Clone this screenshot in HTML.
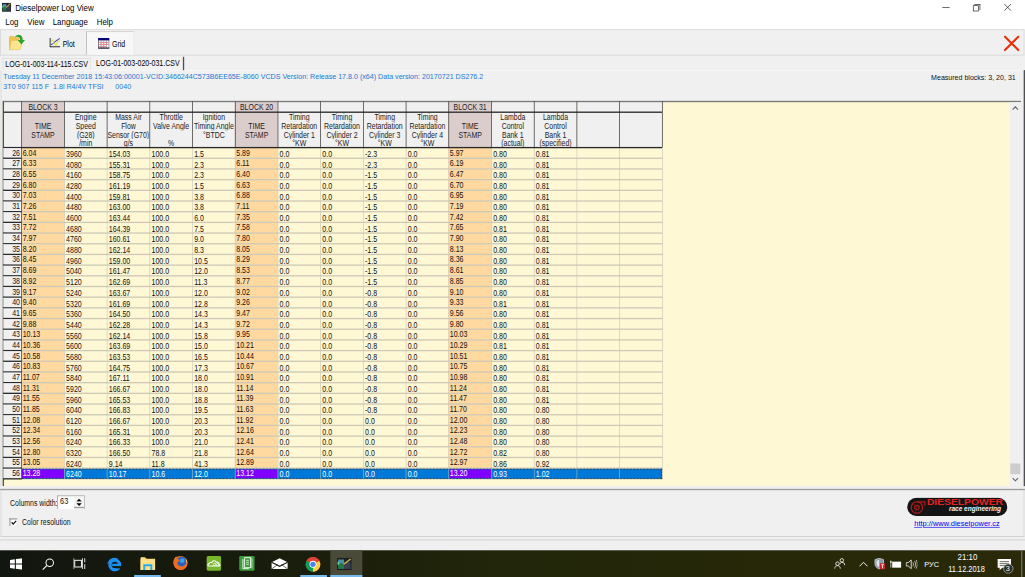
<!DOCTYPE html>
<html><head><meta charset="utf-8"><style>
html,body{margin:0;padding:0;width:1025px;height:577px;overflow:hidden;background:#f0f0f0}
*{box-sizing:border-box}
#root{position:absolute;left:0;top:0;width:1536px;height:864px;transform-origin:0 0;transform:scale(0.667318,0.667824);font-family:"Liberation Sans",sans-serif;color:#000;background:#f0f0f0;overflow:hidden}
.a{position:absolute}
.t{position:absolute;white-space:pre;line-height:1}
.hl{position:absolute;background:#2a2a2a}
.gc{position:absolute;font-size:13px;line-height:13px;text-align:center;color:#1c1c1c;white-space:pre;overflow:hidden}
.gc span{display:block;width:125%;transform:scaleX(0.8);transform-origin:0 0;text-align:center}
.d{position:absolute;font-size:13px;line-height:16px;white-space:pre;color:#111;transform:scaleX(0.81);transform-origin:0 0}
.d.r{transform-origin:100% 0}
</style></head><body><div id="root">

<div class="a" style="left:0;top:0;width:1536px;height:44px;background:#fff"></div>
<svg class="a" style="left:3px;top:4.3px" width="13.5" height="13.5" viewBox="0 0 27 27">
<rect x="0" y="0" width="27" height="27" fill="#1c1f24"/>
<rect x="2" y="4" width="11" height="9" fill="#4a90a0"/>
<rect x="2" y="13" width="11" height="11" fill="#1f7a45"/>
<rect x="1" y="9" width="3" height="6" fill="#6ad0a0"/>
<rect x="13" y="10" width="12" height="14" fill="#3a4050"/>
<path d="M12 14 L17 10 L25 3" stroke="#b8a848" stroke-width="3.2" fill="none"/>
</svg>
<div class="t" style="left:22.5px;top:5.3px;font-size:13px;color:#000;transform:scaleX(0.915);transform-origin:0 0">Dieselpower Log View</div>
<div class="a" style="left:1412px;top:11px;width:11px;height:1px;background:#222"></div>
<div class="a" style="left:1458px;top:8px;width:9px;height:9px;border:1px solid #222"></div>
<div class="a" style="left:1460px;top:6px;width:9px;height:9px;border-top:1px solid #222;border-right:1px solid #222"></div>
<svg class="a" style="left:1504px;top:5px" width="12" height="12" viewBox="0 0 12 12"><path d="M1 1L11 11M11 1L1 11" stroke="#222" stroke-width="1.1"/></svg>
<div class="t" style="left:7.5px;top:26.2px;font-size:13px;color:#000;transform:scaleX(0.91);transform-origin:0 0">Log</div>
<div class="t" style="left:40.8px;top:26.2px;font-size:13px;color:#000;transform:scaleX(0.91);transform-origin:0 0">View</div>
<div class="t" style="left:79.4px;top:26.2px;font-size:13px;color:#000;transform:scaleX(0.91);transform-origin:0 0">Language</div>
<div class="t" style="left:145.4px;top:26.2px;font-size:13px;color:#000;transform:scaleX(0.91);transform-origin:0 0">Help</div>
<div class="a" style="left:0;top:43.5px;width:1535px;height:39px;background:#f0f0f0;border:1px solid #d2d2d2;border-bottom-color:#cfcfcf"></div>
<div class="a" style="left:129px;top:47px;width:72px;height:35px;background:#f7f7f7;border-left:1.5px solid #a8a8a8;border-top:1.5px solid #c4c4c4;border-right:1px solid #e8e8e8"></div>
<svg class="a" style="left:13px;top:50px" width="26" height="26" viewBox="0 0 26 26">
<path d="M1 6.5 Q1 4.5 3 4.5 L7.5 4.5 L9.5 6.5 L15 6.5 L15 22 L1.5 24.5 Z" fill="#f0c250" stroke="#dcaa38" stroke-width="0.8"/>
<path d="M1.2 24.5 L3.5 12.5 Q4 10.5 6 10.5 L20.5 10.5 L18 22.5 Q17.5 24.5 15.5 24.5 Z" fill="#fde48e" stroke="#e6bc50" stroke-width="0.8"/>
<path d="M8.5 6 Q12 1 17 2.5 Q21 4 21 10 L24.5 10 L19 16.5 L13.5 10 L17 10 Q17 6.5 15 5.5 Q12 4.5 8.5 6 Z" fill="#2aa52a"/>
</svg>
<svg class="a" style="left:74px;top:56px" width="17" height="16" viewBox="0 0 17 16">
<path d="M1 1V14H16" fill="none" stroke="#303038" stroke-width="1.8"/>
<path d="M2.5 11 L6 9 L9 6 L12 4 L15.5 1.5" fill="none" stroke="#3a48b8" stroke-width="1.6"/>
<path d="M2.5 6 L5 4 L7 9 L10 12 L12.5 6 L15.5 5" fill="none" stroke="#e8e030" stroke-width="1.6"/>
<path d="M4 15.5V16M8 15.5V16M12 15.5V16" stroke="#888" stroke-width="1"/>
</svg>
<div class="t" style="left:94.4px;top:58.5px;font-size:13px;color:#000;transform:scaleX(0.8);transform-origin:0 0">Plot</div>
<svg class="a" style="left:146.5px;top:56.5px" width="17" height="16" viewBox="0 0 17 16">
<rect x="0.5" y="0.5" width="16" height="15" fill="#fff" stroke="#303040" stroke-width="1"/>
<rect x="0" y="0" width="17" height="3.5" fill="#00007a"/>
<path d="M4.5 3V15M8.5 3V15M12.5 3V15" stroke="#707070" stroke-width="0.9"/>
<path d="M1 6.5H16M1 9.5H16M1 12.5H12" stroke="#e06070" stroke-width="1.1"/>
<rect x="0" y="14" width="17" height="2" fill="#303040"/>
</svg>
<div class="t" style="left:168px;top:58.5px;font-size:13px;color:#000;transform:scaleX(0.8);transform-origin:0 0">Grid</div>
<svg class="a" style="left:1504px;top:53px" width="24" height="24" viewBox="0 0 24 24"><path d="M2 2 L22 22 M22 2 L2 22" stroke="#e8300a" stroke-width="3.2" stroke-linecap="round"/></svg>
<div class="a" style="left:3.5px;top:86.5px;width:132px;height:19px;background:#f0f0f0;border:1px solid #dadada;border-bottom:none"></div>
<div class="a" style="left:136px;top:84.5px;width:140px;height:21px;background:#f2f2f2;border-right:2px solid #505050"></div>
<div class="t" style="left:8.4px;top:89.4px;font-size:13px;color:#000;transform:scaleX(0.81);transform-origin:0 0">LOG-01-003-114-115.CSV</div>
<div class="t" style="left:143.7px;top:87.5px;font-size:13px;color:#000;transform:scaleX(0.81);transform-origin:0 0">LOG-01-003-020-031.CSV</div>
<div class="a" style="left:0;top:105px;width:1536px;height:1px;background:#fafafa"></div>
<div class="a" style="left:0.6px;top:105px;width:1.4px;height:625px;background:#d6d6d6"></div>
<div class="a" style="left:1534.2px;top:105px;width:1.6px;height:625px;background:#505050"></div>
<div class="t" style="left:5px;top:108px;font-size:12px;color:#1a7ad4;transform:scaleX(0.888);transform-origin:0 0">Tuesday 11 December 2018 15:43:06:00001-VCID:3466244C573B6EE65E-8060 VCDS Version: Release 17.8.0 (x64) Data version: 20170721 DS276.2</div>
<div class="t" style="left:5px;top:123px;font-size:12px;color:#1a7ad4;transform:scaleX(0.888);transform-origin:0 0">3T0 907 115 F  1.8l R4/4V TFSI      0040</div>
<div class="t" style="right:14px;top:109.5px;font-size:12px;color:#111;transform:scaleX(0.88);transform-origin:100% 0">Measured blocks: 3, 20, 31</div>
<div class="a" style="left:4px;top:152px;width:1526px;height:576px;background:#fff8d4"></div>
<div class="a" style="left:32px;top:152px;width:64px;height:69px;background:#dccdcd"></div>
<div class="a" style="left:96px;top:152px;width:64px;height:69px;background:#f0f0f0"></div>
<div class="a" style="left:160px;top:152px;width:64px;height:69px;background:#f0f0f0"></div>
<div class="a" style="left:224px;top:152px;width:64px;height:69px;background:#f0f0f0"></div>
<div class="a" style="left:288px;top:152px;width:64px;height:69px;background:#f0f0f0"></div>
<div class="a" style="left:352px;top:152px;width:64px;height:69px;background:#dccdcd"></div>
<div class="a" style="left:416px;top:152px;width:64px;height:69px;background:#f0f0f0"></div>
<div class="a" style="left:480px;top:152px;width:64px;height:69px;background:#f0f0f0"></div>
<div class="a" style="left:544px;top:152px;width:64px;height:69px;background:#f0f0f0"></div>
<div class="a" style="left:608px;top:152px;width:64px;height:69px;background:#f0f0f0"></div>
<div class="a" style="left:672px;top:152px;width:64px;height:69px;background:#dccdcd"></div>
<div class="a" style="left:736px;top:152px;width:64px;height:69px;background:#f0f0f0"></div>
<div class="a" style="left:800px;top:152px;width:64px;height:69px;background:#f0f0f0"></div>
<div class="a" style="left:864px;top:152px;width:64px;height:69px;background:#f0f0f0"></div>
<div class="a" style="left:928px;top:152px;width:64px;height:69px;background:#f0f0f0"></div>
<div class="a" style="left:5px;top:152px;width:27px;height:565px;background:#f0f0f0"></div>
<div class="a" style="left:32px;top:221px;width:64px;height:496px;background:#ffd9a0"></div>
<div class="a" style="left:672px;top:221px;width:64px;height:496px;background:#ffd9a0"></div>
<div class="a" style="left:352px;top:221px;width:64px;height:496px;background:#ffd9a0"></div>
<div class="a" style="left:32px;top:236.35px;width:961px;height:1.2px;background:#cfcab8"></div>
<div class="a" style="left:32px;top:252.35px;width:961px;height:1.2px;background:#cfcab8"></div>
<div class="a" style="left:32px;top:268.35px;width:961px;height:1.2px;background:#cfcab8"></div>
<div class="a" style="left:32px;top:284.35px;width:961px;height:1.2px;background:#cfcab8"></div>
<div class="a" style="left:32px;top:300.35px;width:961px;height:1.2px;background:#cfcab8"></div>
<div class="a" style="left:32px;top:316.35px;width:961px;height:1.2px;background:#cfcab8"></div>
<div class="a" style="left:32px;top:332.35px;width:961px;height:1.2px;background:#cfcab8"></div>
<div class="a" style="left:32px;top:348.35px;width:961px;height:1.2px;background:#cfcab8"></div>
<div class="a" style="left:32px;top:364.35px;width:961px;height:1.2px;background:#cfcab8"></div>
<div class="a" style="left:32px;top:380.35px;width:961px;height:1.2px;background:#cfcab8"></div>
<div class="a" style="left:32px;top:396.35px;width:961px;height:1.2px;background:#cfcab8"></div>
<div class="a" style="left:32px;top:412.35px;width:961px;height:1.2px;background:#cfcab8"></div>
<div class="a" style="left:32px;top:428.35px;width:961px;height:1.2px;background:#cfcab8"></div>
<div class="a" style="left:32px;top:444.35px;width:961px;height:1.2px;background:#cfcab8"></div>
<div class="a" style="left:32px;top:460.35px;width:961px;height:1.2px;background:#cfcab8"></div>
<div class="a" style="left:32px;top:476.35px;width:961px;height:1.2px;background:#cfcab8"></div>
<div class="a" style="left:32px;top:492.35px;width:961px;height:1.2px;background:#cfcab8"></div>
<div class="a" style="left:32px;top:508.35px;width:961px;height:1.2px;background:#cfcab8"></div>
<div class="a" style="left:32px;top:524.35px;width:961px;height:1.2px;background:#cfcab8"></div>
<div class="a" style="left:32px;top:540.35px;width:961px;height:1.2px;background:#cfcab8"></div>
<div class="a" style="left:32px;top:556.35px;width:961px;height:1.2px;background:#cfcab8"></div>
<div class="a" style="left:32px;top:572.35px;width:961px;height:1.2px;background:#cfcab8"></div>
<div class="a" style="left:32px;top:588.35px;width:961px;height:1.2px;background:#cfcab8"></div>
<div class="a" style="left:32px;top:604.35px;width:961px;height:1.2px;background:#cfcab8"></div>
<div class="a" style="left:32px;top:620.35px;width:961px;height:1.2px;background:#cfcab8"></div>
<div class="a" style="left:32px;top:636.35px;width:961px;height:1.2px;background:#cfcab8"></div>
<div class="a" style="left:32px;top:652.35px;width:961px;height:1.2px;background:#cfcab8"></div>
<div class="a" style="left:32px;top:668.35px;width:961px;height:1.2px;background:#cfcab8"></div>
<div class="a" style="left:32px;top:684.35px;width:961px;height:1.2px;background:#cfcab8"></div>
<div class="a" style="left:32px;top:700.35px;width:961px;height:1.2px;background:#cfcab8"></div>
<div class="a" style="left:32px;top:716.35px;width:961px;height:1.2px;background:#cfcab8"></div>
<div class="a" style="left:95.64999999999999px;top:221px;width:1.2px;height:496px;background:#cdc9b9"></div>
<div class="a" style="left:159.65px;top:221px;width:1.2px;height:496px;background:#cdc9b9"></div>
<div class="a" style="left:223.65px;top:221px;width:1.2px;height:496px;background:#cdc9b9"></div>
<div class="a" style="left:287.65000000000003px;top:221px;width:1.2px;height:496px;background:#cdc9b9"></div>
<div class="a" style="left:351.65000000000003px;top:221px;width:1.2px;height:496px;background:#cdc9b9"></div>
<div class="a" style="left:415.65000000000003px;top:221px;width:1.2px;height:496px;background:#cdc9b9"></div>
<div class="a" style="left:479.65000000000003px;top:221px;width:1.2px;height:496px;background:#cdc9b9"></div>
<div class="a" style="left:543.65px;top:221px;width:1.2px;height:496px;background:#cdc9b9"></div>
<div class="a" style="left:607.65px;top:221px;width:1.2px;height:496px;background:#cdc9b9"></div>
<div class="a" style="left:671.65px;top:221px;width:1.2px;height:496px;background:#cdc9b9"></div>
<div class="a" style="left:735.65px;top:221px;width:1.2px;height:496px;background:#cdc9b9"></div>
<div class="a" style="left:799.65px;top:221px;width:1.2px;height:496px;background:#cdc9b9"></div>
<div class="a" style="left:863.65px;top:221px;width:1.2px;height:496px;background:#cdc9b9"></div>
<div class="a" style="left:927.65px;top:221px;width:1.2px;height:496px;background:#cdc9b9"></div>
<div class="a" style="left:991.65px;top:221px;width:1.2px;height:496px;background:#cdc9b9"></div>
<div class="a" style="left:32.5px;top:701.5px;width:959.5px;height:15.5px;background:#0078d7;border:1px dashed #3a3020"></div>
<div class="a" style="left:33px;top:702.5px;width:63px;height:13.5px;background:#8000ff"></div>
<div class="a" style="left:673px;top:702.5px;width:63px;height:13.5px;background:#8000ff"></div>
<div class="a" style="left:353px;top:702.5px;width:63px;height:13.5px;background:#8000ff"></div>
<div class="a" style="left:95.64999999999999px;top:702px;width:1px;height:15px;background:#b8c8b0;opacity:0.8"></div>
<div class="a" style="left:159.65px;top:702px;width:1px;height:15px;background:#b8c8b0;opacity:0.8"></div>
<div class="a" style="left:223.65px;top:702px;width:1px;height:15px;background:#b8c8b0;opacity:0.8"></div>
<div class="a" style="left:287.65000000000003px;top:702px;width:1px;height:15px;background:#b8c8b0;opacity:0.8"></div>
<div class="a" style="left:351.65000000000003px;top:702px;width:1px;height:15px;background:#b8c8b0;opacity:0.8"></div>
<div class="a" style="left:415.65000000000003px;top:702px;width:1px;height:15px;background:#b8c8b0;opacity:0.8"></div>
<div class="a" style="left:479.65000000000003px;top:702px;width:1px;height:15px;background:#b8c8b0;opacity:0.8"></div>
<div class="a" style="left:543.65px;top:702px;width:1px;height:15px;background:#b8c8b0;opacity:0.8"></div>
<div class="a" style="left:607.65px;top:702px;width:1px;height:15px;background:#b8c8b0;opacity:0.8"></div>
<div class="a" style="left:671.65px;top:702px;width:1px;height:15px;background:#b8c8b0;opacity:0.8"></div>
<div class="a" style="left:735.65px;top:702px;width:1px;height:15px;background:#b8c8b0;opacity:0.8"></div>
<div class="a" style="left:799.65px;top:702px;width:1px;height:15px;background:#b8c8b0;opacity:0.8"></div>
<div class="a" style="left:863.65px;top:702px;width:1px;height:15px;background:#b8c8b0;opacity:0.8"></div>
<div class="a" style="left:927.65px;top:702px;width:1px;height:15px;background:#b8c8b0;opacity:0.8"></div>
<div class="hl" style="left:4px;top:151.25px;width:1526px;height:1.5px;background:#787878"></div>
<div class="hl" style="left:4.2px;top:152px;width:1.5px;height:576px;background:#505050"></div>
<div class="hl" style="left:5px;top:167.25px;width:987px;height:1.5px"></div>
<div class="hl" style="left:5px;top:220.25px;width:987px;height:1.5px"></div>
<div class="hl" style="left:31.6px;top:152px;width:1.7px;height:69px"></div>
<div class="hl" style="left:95.6px;top:152px;width:1.7px;height:69px"></div>
<div class="hl" style="left:159.60000000000002px;top:152px;width:1.7px;height:69px"></div>
<div class="hl" style="left:223.60000000000002px;top:152px;width:1.7px;height:69px"></div>
<div class="hl" style="left:287.6px;top:152px;width:1.7px;height:69px"></div>
<div class="hl" style="left:351.6px;top:152px;width:1.7px;height:69px"></div>
<div class="hl" style="left:415.6px;top:152px;width:1.7px;height:69px"></div>
<div class="hl" style="left:479.6px;top:152px;width:1.7px;height:69px"></div>
<div class="hl" style="left:543.5999999999999px;top:152px;width:1.7px;height:69px"></div>
<div class="hl" style="left:607.5999999999999px;top:152px;width:1.7px;height:69px"></div>
<div class="hl" style="left:671.5999999999999px;top:152px;width:1.7px;height:69px"></div>
<div class="hl" style="left:735.5999999999999px;top:152px;width:1.7px;height:69px"></div>
<div class="hl" style="left:799.5999999999999px;top:152px;width:1.7px;height:69px"></div>
<div class="hl" style="left:863.5999999999999px;top:152px;width:1.7px;height:69px"></div>
<div class="hl" style="left:927.5999999999999px;top:152px;width:1.7px;height:69px"></div>
<div class="hl" style="left:991.5999999999999px;top:152px;width:1.7px;height:69px"></div>
<div class="hl" style="left:31.6px;top:221px;width:1.7px;height:497px"></div>
<div class="a" style="left:5px;top:221.75px;width:26.25px;height:1px;background:#f8f8f8"></div>
<div class="a" style="left:5px;top:221.75px;width:1px;height:14.5px;background:#f8f8f8"></div>
<div class="hl" style="left:5px;top:236.25px;width:27px;height:1.5px"></div>
<div class="a" style="left:5px;top:237.75px;width:26.25px;height:1px;background:#f8f8f8"></div>
<div class="a" style="left:5px;top:237.75px;width:1px;height:14.5px;background:#f8f8f8"></div>
<div class="hl" style="left:5px;top:252.25px;width:27px;height:1.5px"></div>
<div class="a" style="left:5px;top:253.75px;width:26.25px;height:1px;background:#f8f8f8"></div>
<div class="a" style="left:5px;top:253.75px;width:1px;height:14.5px;background:#f8f8f8"></div>
<div class="hl" style="left:5px;top:268.25px;width:27px;height:1.5px"></div>
<div class="a" style="left:5px;top:269.75px;width:26.25px;height:1px;background:#f8f8f8"></div>
<div class="a" style="left:5px;top:269.75px;width:1px;height:14.5px;background:#f8f8f8"></div>
<div class="hl" style="left:5px;top:284.25px;width:27px;height:1.5px"></div>
<div class="a" style="left:5px;top:285.75px;width:26.25px;height:1px;background:#f8f8f8"></div>
<div class="a" style="left:5px;top:285.75px;width:1px;height:14.5px;background:#f8f8f8"></div>
<div class="hl" style="left:5px;top:300.25px;width:27px;height:1.5px"></div>
<div class="a" style="left:5px;top:301.75px;width:26.25px;height:1px;background:#f8f8f8"></div>
<div class="a" style="left:5px;top:301.75px;width:1px;height:14.5px;background:#f8f8f8"></div>
<div class="hl" style="left:5px;top:316.25px;width:27px;height:1.5px"></div>
<div class="a" style="left:5px;top:317.75px;width:26.25px;height:1px;background:#f8f8f8"></div>
<div class="a" style="left:5px;top:317.75px;width:1px;height:14.5px;background:#f8f8f8"></div>
<div class="hl" style="left:5px;top:332.25px;width:27px;height:1.5px"></div>
<div class="a" style="left:5px;top:333.75px;width:26.25px;height:1px;background:#f8f8f8"></div>
<div class="a" style="left:5px;top:333.75px;width:1px;height:14.5px;background:#f8f8f8"></div>
<div class="hl" style="left:5px;top:348.25px;width:27px;height:1.5px"></div>
<div class="a" style="left:5px;top:349.75px;width:26.25px;height:1px;background:#f8f8f8"></div>
<div class="a" style="left:5px;top:349.75px;width:1px;height:14.5px;background:#f8f8f8"></div>
<div class="hl" style="left:5px;top:364.25px;width:27px;height:1.5px"></div>
<div class="a" style="left:5px;top:365.75px;width:26.25px;height:1px;background:#f8f8f8"></div>
<div class="a" style="left:5px;top:365.75px;width:1px;height:14.5px;background:#f8f8f8"></div>
<div class="hl" style="left:5px;top:380.25px;width:27px;height:1.5px"></div>
<div class="a" style="left:5px;top:381.75px;width:26.25px;height:1px;background:#f8f8f8"></div>
<div class="a" style="left:5px;top:381.75px;width:1px;height:14.5px;background:#f8f8f8"></div>
<div class="hl" style="left:5px;top:396.25px;width:27px;height:1.5px"></div>
<div class="a" style="left:5px;top:397.75px;width:26.25px;height:1px;background:#f8f8f8"></div>
<div class="a" style="left:5px;top:397.75px;width:1px;height:14.5px;background:#f8f8f8"></div>
<div class="hl" style="left:5px;top:412.25px;width:27px;height:1.5px"></div>
<div class="a" style="left:5px;top:413.75px;width:26.25px;height:1px;background:#f8f8f8"></div>
<div class="a" style="left:5px;top:413.75px;width:1px;height:14.5px;background:#f8f8f8"></div>
<div class="hl" style="left:5px;top:428.25px;width:27px;height:1.5px"></div>
<div class="a" style="left:5px;top:429.75px;width:26.25px;height:1px;background:#f8f8f8"></div>
<div class="a" style="left:5px;top:429.75px;width:1px;height:14.5px;background:#f8f8f8"></div>
<div class="hl" style="left:5px;top:444.25px;width:27px;height:1.5px"></div>
<div class="a" style="left:5px;top:445.75px;width:26.25px;height:1px;background:#f8f8f8"></div>
<div class="a" style="left:5px;top:445.75px;width:1px;height:14.5px;background:#f8f8f8"></div>
<div class="hl" style="left:5px;top:460.25px;width:27px;height:1.5px"></div>
<div class="a" style="left:5px;top:461.75px;width:26.25px;height:1px;background:#f8f8f8"></div>
<div class="a" style="left:5px;top:461.75px;width:1px;height:14.5px;background:#f8f8f8"></div>
<div class="hl" style="left:5px;top:476.25px;width:27px;height:1.5px"></div>
<div class="a" style="left:5px;top:477.75px;width:26.25px;height:1px;background:#f8f8f8"></div>
<div class="a" style="left:5px;top:477.75px;width:1px;height:14.5px;background:#f8f8f8"></div>
<div class="hl" style="left:5px;top:492.25px;width:27px;height:1.5px"></div>
<div class="a" style="left:5px;top:493.75px;width:26.25px;height:1px;background:#f8f8f8"></div>
<div class="a" style="left:5px;top:493.75px;width:1px;height:14.5px;background:#f8f8f8"></div>
<div class="hl" style="left:5px;top:508.25px;width:27px;height:1.5px"></div>
<div class="a" style="left:5px;top:509.75px;width:26.25px;height:1px;background:#f8f8f8"></div>
<div class="a" style="left:5px;top:509.75px;width:1px;height:14.5px;background:#f8f8f8"></div>
<div class="hl" style="left:5px;top:524.25px;width:27px;height:1.5px"></div>
<div class="a" style="left:5px;top:525.75px;width:26.25px;height:1px;background:#f8f8f8"></div>
<div class="a" style="left:5px;top:525.75px;width:1px;height:14.5px;background:#f8f8f8"></div>
<div class="hl" style="left:5px;top:540.25px;width:27px;height:1.5px"></div>
<div class="a" style="left:5px;top:541.75px;width:26.25px;height:1px;background:#f8f8f8"></div>
<div class="a" style="left:5px;top:541.75px;width:1px;height:14.5px;background:#f8f8f8"></div>
<div class="hl" style="left:5px;top:556.25px;width:27px;height:1.5px"></div>
<div class="a" style="left:5px;top:557.75px;width:26.25px;height:1px;background:#f8f8f8"></div>
<div class="a" style="left:5px;top:557.75px;width:1px;height:14.5px;background:#f8f8f8"></div>
<div class="hl" style="left:5px;top:572.25px;width:27px;height:1.5px"></div>
<div class="a" style="left:5px;top:573.75px;width:26.25px;height:1px;background:#f8f8f8"></div>
<div class="a" style="left:5px;top:573.75px;width:1px;height:14.5px;background:#f8f8f8"></div>
<div class="hl" style="left:5px;top:588.25px;width:27px;height:1.5px"></div>
<div class="a" style="left:5px;top:589.75px;width:26.25px;height:1px;background:#f8f8f8"></div>
<div class="a" style="left:5px;top:589.75px;width:1px;height:14.5px;background:#f8f8f8"></div>
<div class="hl" style="left:5px;top:604.25px;width:27px;height:1.5px"></div>
<div class="a" style="left:5px;top:605.75px;width:26.25px;height:1px;background:#f8f8f8"></div>
<div class="a" style="left:5px;top:605.75px;width:1px;height:14.5px;background:#f8f8f8"></div>
<div class="hl" style="left:5px;top:620.25px;width:27px;height:1.5px"></div>
<div class="a" style="left:5px;top:621.75px;width:26.25px;height:1px;background:#f8f8f8"></div>
<div class="a" style="left:5px;top:621.75px;width:1px;height:14.5px;background:#f8f8f8"></div>
<div class="hl" style="left:5px;top:636.25px;width:27px;height:1.5px"></div>
<div class="a" style="left:5px;top:637.75px;width:26.25px;height:1px;background:#f8f8f8"></div>
<div class="a" style="left:5px;top:637.75px;width:1px;height:14.5px;background:#f8f8f8"></div>
<div class="hl" style="left:5px;top:652.25px;width:27px;height:1.5px"></div>
<div class="a" style="left:5px;top:653.75px;width:26.25px;height:1px;background:#f8f8f8"></div>
<div class="a" style="left:5px;top:653.75px;width:1px;height:14.5px;background:#f8f8f8"></div>
<div class="hl" style="left:5px;top:668.25px;width:27px;height:1.5px"></div>
<div class="a" style="left:5px;top:669.75px;width:26.25px;height:1px;background:#f8f8f8"></div>
<div class="a" style="left:5px;top:669.75px;width:1px;height:14.5px;background:#f8f8f8"></div>
<div class="hl" style="left:5px;top:684.25px;width:27px;height:1.5px"></div>
<div class="a" style="left:5px;top:685.75px;width:26.25px;height:1px;background:#f8f8f8"></div>
<div class="a" style="left:5px;top:685.75px;width:1px;height:14.5px;background:#f8f8f8"></div>
<div class="hl" style="left:5px;top:700.25px;width:27px;height:1.5px"></div>
<div class="a" style="left:5px;top:701.75px;width:26.25px;height:1px;background:#f8f8f8"></div>
<div class="a" style="left:5px;top:701.75px;width:1px;height:14.5px;background:#f8f8f8"></div>
<div class="hl" style="left:5px;top:716.25px;width:27px;height:1.5px"></div>
<div class="gc" style="left:33px;top:152px;width:63px;height:16px;line-height:16px"><span>BLOCK 3</span></div>
<div class="gc" style="left:33px;top:182px;width:63px;height:13px"><span>TIME</span></div>
<div class="gc" style="left:33px;top:195px;width:63px;height:13px"><span>STAMP</span></div>
<div class="gc" style="left:97px;top:169px;width:63px;height:13px"><span>Engine</span></div>
<div class="gc" style="left:97px;top:182px;width:63px;height:13px"><span>Speed</span></div>
<div class="gc" style="left:97px;top:195px;width:63px;height:13px"><span>(G28)</span></div>
<div class="gc" style="left:97px;top:208px;width:63px;height:13px"><span>/min</span></div>
<div class="gc" style="left:161px;top:169px;width:63px;height:13px"><span>Mass Air</span></div>
<div class="gc" style="left:161px;top:182px;width:63px;height:13px"><span>Flow</span></div>
<div class="gc" style="left:161px;top:195px;width:63px;height:13px;text-align:left"><span style="text-align:left">Sensor (G70)</span></div>
<div class="gc" style="left:161px;top:208px;width:63px;height:13px"><span>g/s</span></div>
<div class="gc" style="left:225px;top:169px;width:63px;height:13px"><span>Throttle</span></div>
<div class="gc" style="left:225px;top:182px;width:63px;height:13px"><span>Valve Angle</span></div>
<div class="gc" style="left:225px;top:208px;width:63px;height:13px"><span>%</span></div>
<div class="gc" style="left:289px;top:169px;width:63px;height:13px"><span>Ignition</span></div>
<div class="gc" style="left:289px;top:182px;width:63px;height:13px"><span>Timing Angle</span></div>
<div class="gc" style="left:289px;top:195px;width:63px;height:13px"><span>°BTDC</span></div>
<div class="gc" style="left:353px;top:152px;width:63px;height:16px;line-height:16px"><span>BLOCK 20</span></div>
<div class="gc" style="left:353px;top:182px;width:63px;height:13px"><span>TIME</span></div>
<div class="gc" style="left:353px;top:195px;width:63px;height:13px"><span>STAMP</span></div>
<div class="gc" style="left:417px;top:169px;width:63px;height:13px"><span>Timing</span></div>
<div class="gc" style="left:417px;top:182px;width:63px;height:13px"><span>Retardation</span></div>
<div class="gc" style="left:417px;top:195px;width:63px;height:13px"><span>Cylinder 1</span></div>
<div class="gc" style="left:417px;top:208px;width:63px;height:13px"><span>°KW</span></div>
<div class="gc" style="left:481px;top:169px;width:63px;height:13px"><span>Timing</span></div>
<div class="gc" style="left:481px;top:182px;width:63px;height:13px"><span>Retardation</span></div>
<div class="gc" style="left:481px;top:195px;width:63px;height:13px"><span>Cylinder 2</span></div>
<div class="gc" style="left:481px;top:208px;width:63px;height:13px"><span>°KW</span></div>
<div class="gc" style="left:545px;top:169px;width:63px;height:13px"><span>Timing</span></div>
<div class="gc" style="left:545px;top:182px;width:63px;height:13px"><span>Retardation</span></div>
<div class="gc" style="left:545px;top:195px;width:63px;height:13px"><span>Cylinder 3</span></div>
<div class="gc" style="left:545px;top:208px;width:63px;height:13px"><span>°KW</span></div>
<div class="gc" style="left:609px;top:169px;width:63px;height:13px"><span>Timing</span></div>
<div class="gc" style="left:609px;top:182px;width:63px;height:13px"><span>Retardation</span></div>
<div class="gc" style="left:609px;top:195px;width:63px;height:13px"><span>Cylinder 4</span></div>
<div class="gc" style="left:609px;top:208px;width:63px;height:13px"><span>°KW</span></div>
<div class="gc" style="left:673px;top:152px;width:63px;height:16px;line-height:16px"><span>BLOCK 31</span></div>
<div class="gc" style="left:673px;top:182px;width:63px;height:13px"><span>TIME</span></div>
<div class="gc" style="left:673px;top:195px;width:63px;height:13px"><span>STAMP</span></div>
<div class="gc" style="left:737px;top:169px;width:63px;height:13px"><span>Lambda</span></div>
<div class="gc" style="left:737px;top:182px;width:63px;height:13px"><span>Control</span></div>
<div class="gc" style="left:737px;top:195px;width:63px;height:13px"><span>Bank 1</span></div>
<div class="gc" style="left:737px;top:208px;width:63px;height:13px"><span>(actual)</span></div>
<div class="gc" style="left:801px;top:169px;width:63px;height:13px"><span>Lambda</span></div>
<div class="gc" style="left:801px;top:182px;width:63px;height:13px"><span>Control</span></div>
<div class="gc" style="left:801px;top:195px;width:63px;height:13px"><span>Bank 1</span></div>
<div class="gc" style="left:801px;top:208px;width:63px;height:13px"><span>(specified)</span></div>
<div class="d r" style="left:5px;top:221.0px;width:25px;text-align:right;">26</div>
<div class="d r" style="left:5px;top:237.0px;width:25px;text-align:right;">27</div>
<div class="d r" style="left:5px;top:253.0px;width:25px;text-align:right;">28</div>
<div class="d r" style="left:5px;top:269.0px;width:25px;text-align:right;">29</div>
<div class="d r" style="left:5px;top:285.0px;width:25px;text-align:right;">30</div>
<div class="d r" style="left:5px;top:301.0px;width:25px;text-align:right;">31</div>
<div class="d r" style="left:5px;top:317.0px;width:25px;text-align:right;">32</div>
<div class="d r" style="left:5px;top:333.0px;width:25px;text-align:right;">33</div>
<div class="d r" style="left:5px;top:349.0px;width:25px;text-align:right;">34</div>
<div class="d r" style="left:5px;top:365.0px;width:25px;text-align:right;">35</div>
<div class="d r" style="left:5px;top:381.0px;width:25px;text-align:right;">36</div>
<div class="d r" style="left:5px;top:397.0px;width:25px;text-align:right;">37</div>
<div class="d r" style="left:5px;top:413.0px;width:25px;text-align:right;">38</div>
<div class="d r" style="left:5px;top:429.0px;width:25px;text-align:right;">39</div>
<div class="d r" style="left:5px;top:445.0px;width:25px;text-align:right;">40</div>
<div class="d r" style="left:5px;top:461.0px;width:25px;text-align:right;">41</div>
<div class="d r" style="left:5px;top:477.0px;width:25px;text-align:right;">42</div>
<div class="d r" style="left:5px;top:493.0px;width:25px;text-align:right;">43</div>
<div class="d r" style="left:5px;top:509.0px;width:25px;text-align:right;">44</div>
<div class="d r" style="left:5px;top:525.0px;width:25px;text-align:right;">45</div>
<div class="d r" style="left:5px;top:541.0px;width:25px;text-align:right;">46</div>
<div class="d r" style="left:5px;top:557.0px;width:25px;text-align:right;">47</div>
<div class="d r" style="left:5px;top:573.0px;width:25px;text-align:right;">48</div>
<div class="d r" style="left:5px;top:589.0px;width:25px;text-align:right;">49</div>
<div class="d r" style="left:5px;top:605.0px;width:25px;text-align:right;">50</div>
<div class="d r" style="left:5px;top:621.0px;width:25px;text-align:right;">51</div>
<div class="d r" style="left:5px;top:637.0px;width:25px;text-align:right;">52</div>
<div class="d r" style="left:5px;top:653.0px;width:25px;text-align:right;">53</div>
<div class="d r" style="left:5px;top:669.0px;width:25px;text-align:right;">54</div>
<div class="d r" style="left:5px;top:685.0px;width:25px;text-align:right;">55</div>
<div class="d r" style="left:5px;top:701.0px;width:25px;text-align:right;">56</div>
<div class="d" style="left:34px;top:221.0px;color:#111">6.04</div>
<div class="d" style="left:98.8px;top:223.0px;color:#111">3960</div>
<div class="d" style="left:162.8px;top:223.0px;color:#111">154.03</div>
<div class="d" style="left:226.8px;top:223.0px;color:#111">100.0</div>
<div class="d" style="left:290.8px;top:223.0px;color:#111">1.5</div>
<div class="d" style="left:354px;top:221.0px;color:#111">5.89</div>
<div class="d" style="left:418.8px;top:223.0px;color:#111">0.0</div>
<div class="d" style="left:482.8px;top:223.0px;color:#111">0.0</div>
<div class="d" style="left:546.8px;top:223.0px;color:#111">-2.3</div>
<div class="d" style="left:610.8px;top:223.0px;color:#111">0.0</div>
<div class="d" style="left:674px;top:221.0px;color:#111">5.97</div>
<div class="d" style="left:738.8px;top:223.0px;color:#111">0.80</div>
<div class="d" style="left:802.8px;top:223.0px;color:#111">0.81</div>
<div class="d" style="left:34px;top:237.0px;color:#111">6.33</div>
<div class="d" style="left:98.8px;top:239.0px;color:#111">4080</div>
<div class="d" style="left:162.8px;top:239.0px;color:#111">155.31</div>
<div class="d" style="left:226.8px;top:239.0px;color:#111">100.0</div>
<div class="d" style="left:290.8px;top:239.0px;color:#111">2.3</div>
<div class="d" style="left:354px;top:237.0px;color:#111">6.11</div>
<div class="d" style="left:418.8px;top:239.0px;color:#111">0.0</div>
<div class="d" style="left:482.8px;top:239.0px;color:#111">0.0</div>
<div class="d" style="left:546.8px;top:239.0px;color:#111">-2.3</div>
<div class="d" style="left:610.8px;top:239.0px;color:#111">0.0</div>
<div class="d" style="left:674px;top:237.0px;color:#111">6.19</div>
<div class="d" style="left:738.8px;top:239.0px;color:#111">0.80</div>
<div class="d" style="left:802.8px;top:239.0px;color:#111">0.81</div>
<div class="d" style="left:34px;top:253.0px;color:#111">6.55</div>
<div class="d" style="left:98.8px;top:255.0px;color:#111">4160</div>
<div class="d" style="left:162.8px;top:255.0px;color:#111">158.75</div>
<div class="d" style="left:226.8px;top:255.0px;color:#111">100.0</div>
<div class="d" style="left:290.8px;top:255.0px;color:#111">2.3</div>
<div class="d" style="left:354px;top:253.0px;color:#111">6.40</div>
<div class="d" style="left:418.8px;top:255.0px;color:#111">0.0</div>
<div class="d" style="left:482.8px;top:255.0px;color:#111">0.0</div>
<div class="d" style="left:546.8px;top:255.0px;color:#111">-1.5</div>
<div class="d" style="left:610.8px;top:255.0px;color:#111">0.0</div>
<div class="d" style="left:674px;top:253.0px;color:#111">6.47</div>
<div class="d" style="left:738.8px;top:255.0px;color:#111">0.80</div>
<div class="d" style="left:802.8px;top:255.0px;color:#111">0.81</div>
<div class="d" style="left:34px;top:269.0px;color:#111">6.80</div>
<div class="d" style="left:98.8px;top:271.0px;color:#111">4280</div>
<div class="d" style="left:162.8px;top:271.0px;color:#111">161.19</div>
<div class="d" style="left:226.8px;top:271.0px;color:#111">100.0</div>
<div class="d" style="left:290.8px;top:271.0px;color:#111">1.5</div>
<div class="d" style="left:354px;top:269.0px;color:#111">6.63</div>
<div class="d" style="left:418.8px;top:271.0px;color:#111">0.0</div>
<div class="d" style="left:482.8px;top:271.0px;color:#111">0.0</div>
<div class="d" style="left:546.8px;top:271.0px;color:#111">-1.5</div>
<div class="d" style="left:610.8px;top:271.0px;color:#111">0.0</div>
<div class="d" style="left:674px;top:269.0px;color:#111">6.70</div>
<div class="d" style="left:738.8px;top:271.0px;color:#111">0.80</div>
<div class="d" style="left:802.8px;top:271.0px;color:#111">0.81</div>
<div class="d" style="left:34px;top:285.0px;color:#111">7.03</div>
<div class="d" style="left:98.8px;top:287.0px;color:#111">4400</div>
<div class="d" style="left:162.8px;top:287.0px;color:#111">159.81</div>
<div class="d" style="left:226.8px;top:287.0px;color:#111">100.0</div>
<div class="d" style="left:290.8px;top:287.0px;color:#111">3.8</div>
<div class="d" style="left:354px;top:285.0px;color:#111">6.88</div>
<div class="d" style="left:418.8px;top:287.0px;color:#111">0.0</div>
<div class="d" style="left:482.8px;top:287.0px;color:#111">0.0</div>
<div class="d" style="left:546.8px;top:287.0px;color:#111">-1.5</div>
<div class="d" style="left:610.8px;top:287.0px;color:#111">0.0</div>
<div class="d" style="left:674px;top:285.0px;color:#111">6.95</div>
<div class="d" style="left:738.8px;top:287.0px;color:#111">0.80</div>
<div class="d" style="left:802.8px;top:287.0px;color:#111">0.81</div>
<div class="d" style="left:34px;top:301.0px;color:#111">7.26</div>
<div class="d" style="left:98.8px;top:303.0px;color:#111">4480</div>
<div class="d" style="left:162.8px;top:303.0px;color:#111">163.00</div>
<div class="d" style="left:226.8px;top:303.0px;color:#111">100.0</div>
<div class="d" style="left:290.8px;top:303.0px;color:#111">3.8</div>
<div class="d" style="left:354px;top:301.0px;color:#111">7.11</div>
<div class="d" style="left:418.8px;top:303.0px;color:#111">0.0</div>
<div class="d" style="left:482.8px;top:303.0px;color:#111">0.0</div>
<div class="d" style="left:546.8px;top:303.0px;color:#111">-1.5</div>
<div class="d" style="left:610.8px;top:303.0px;color:#111">0.0</div>
<div class="d" style="left:674px;top:301.0px;color:#111">7.19</div>
<div class="d" style="left:738.8px;top:303.0px;color:#111">0.80</div>
<div class="d" style="left:802.8px;top:303.0px;color:#111">0.81</div>
<div class="d" style="left:34px;top:317.0px;color:#111">7.51</div>
<div class="d" style="left:98.8px;top:319.0px;color:#111">4600</div>
<div class="d" style="left:162.8px;top:319.0px;color:#111">163.44</div>
<div class="d" style="left:226.8px;top:319.0px;color:#111">100.0</div>
<div class="d" style="left:290.8px;top:319.0px;color:#111">6.0</div>
<div class="d" style="left:354px;top:317.0px;color:#111">7.35</div>
<div class="d" style="left:418.8px;top:319.0px;color:#111">0.0</div>
<div class="d" style="left:482.8px;top:319.0px;color:#111">0.0</div>
<div class="d" style="left:546.8px;top:319.0px;color:#111">-1.5</div>
<div class="d" style="left:610.8px;top:319.0px;color:#111">0.0</div>
<div class="d" style="left:674px;top:317.0px;color:#111">7.42</div>
<div class="d" style="left:738.8px;top:319.0px;color:#111">0.80</div>
<div class="d" style="left:802.8px;top:319.0px;color:#111">0.81</div>
<div class="d" style="left:34px;top:333.0px;color:#111">7.72</div>
<div class="d" style="left:98.8px;top:335.0px;color:#111">4680</div>
<div class="d" style="left:162.8px;top:335.0px;color:#111">164.39</div>
<div class="d" style="left:226.8px;top:335.0px;color:#111">100.0</div>
<div class="d" style="left:290.8px;top:335.0px;color:#111">7.5</div>
<div class="d" style="left:354px;top:333.0px;color:#111">7.58</div>
<div class="d" style="left:418.8px;top:335.0px;color:#111">0.0</div>
<div class="d" style="left:482.8px;top:335.0px;color:#111">0.0</div>
<div class="d" style="left:546.8px;top:335.0px;color:#111">-1.5</div>
<div class="d" style="left:610.8px;top:335.0px;color:#111">0.0</div>
<div class="d" style="left:674px;top:333.0px;color:#111">7.65</div>
<div class="d" style="left:738.8px;top:335.0px;color:#111">0.81</div>
<div class="d" style="left:802.8px;top:335.0px;color:#111">0.81</div>
<div class="d" style="left:34px;top:349.0px;color:#111">7.97</div>
<div class="d" style="left:98.8px;top:351.0px;color:#111">4760</div>
<div class="d" style="left:162.8px;top:351.0px;color:#111">160.61</div>
<div class="d" style="left:226.8px;top:351.0px;color:#111">100.0</div>
<div class="d" style="left:290.8px;top:351.0px;color:#111">9.0</div>
<div class="d" style="left:354px;top:349.0px;color:#111">7.80</div>
<div class="d" style="left:418.8px;top:351.0px;color:#111">0.0</div>
<div class="d" style="left:482.8px;top:351.0px;color:#111">0.0</div>
<div class="d" style="left:546.8px;top:351.0px;color:#111">-1.5</div>
<div class="d" style="left:610.8px;top:351.0px;color:#111">0.0</div>
<div class="d" style="left:674px;top:349.0px;color:#111">7.90</div>
<div class="d" style="left:738.8px;top:351.0px;color:#111">0.80</div>
<div class="d" style="left:802.8px;top:351.0px;color:#111">0.81</div>
<div class="d" style="left:34px;top:365.0px;color:#111">8.20</div>
<div class="d" style="left:98.8px;top:367.0px;color:#111">4880</div>
<div class="d" style="left:162.8px;top:367.0px;color:#111">162.14</div>
<div class="d" style="left:226.8px;top:367.0px;color:#111">100.0</div>
<div class="d" style="left:290.8px;top:367.0px;color:#111">8.3</div>
<div class="d" style="left:354px;top:365.0px;color:#111">8.05</div>
<div class="d" style="left:418.8px;top:367.0px;color:#111">0.0</div>
<div class="d" style="left:482.8px;top:367.0px;color:#111">0.0</div>
<div class="d" style="left:546.8px;top:367.0px;color:#111">-1.5</div>
<div class="d" style="left:610.8px;top:367.0px;color:#111">0.0</div>
<div class="d" style="left:674px;top:365.0px;color:#111">8.13</div>
<div class="d" style="left:738.8px;top:367.0px;color:#111">0.80</div>
<div class="d" style="left:802.8px;top:367.0px;color:#111">0.81</div>
<div class="d" style="left:34px;top:381.0px;color:#111">8.45</div>
<div class="d" style="left:98.8px;top:383.0px;color:#111">4960</div>
<div class="d" style="left:162.8px;top:383.0px;color:#111">159.00</div>
<div class="d" style="left:226.8px;top:383.0px;color:#111">100.0</div>
<div class="d" style="left:290.8px;top:383.0px;color:#111">10.5</div>
<div class="d" style="left:354px;top:381.0px;color:#111">8.29</div>
<div class="d" style="left:418.8px;top:383.0px;color:#111">0.0</div>
<div class="d" style="left:482.8px;top:383.0px;color:#111">0.0</div>
<div class="d" style="left:546.8px;top:383.0px;color:#111">-1.5</div>
<div class="d" style="left:610.8px;top:383.0px;color:#111">0.0</div>
<div class="d" style="left:674px;top:381.0px;color:#111">8.36</div>
<div class="d" style="left:738.8px;top:383.0px;color:#111">0.80</div>
<div class="d" style="left:802.8px;top:383.0px;color:#111">0.81</div>
<div class="d" style="left:34px;top:397.0px;color:#111">8.69</div>
<div class="d" style="left:98.8px;top:399.0px;color:#111">5040</div>
<div class="d" style="left:162.8px;top:399.0px;color:#111">161.47</div>
<div class="d" style="left:226.8px;top:399.0px;color:#111">100.0</div>
<div class="d" style="left:290.8px;top:399.0px;color:#111">12.0</div>
<div class="d" style="left:354px;top:397.0px;color:#111">8.53</div>
<div class="d" style="left:418.8px;top:399.0px;color:#111">0.0</div>
<div class="d" style="left:482.8px;top:399.0px;color:#111">0.0</div>
<div class="d" style="left:546.8px;top:399.0px;color:#111">-1.5</div>
<div class="d" style="left:610.8px;top:399.0px;color:#111">0.0</div>
<div class="d" style="left:674px;top:397.0px;color:#111">8.61</div>
<div class="d" style="left:738.8px;top:399.0px;color:#111">0.80</div>
<div class="d" style="left:802.8px;top:399.0px;color:#111">0.81</div>
<div class="d" style="left:34px;top:413.0px;color:#111">8.92</div>
<div class="d" style="left:98.8px;top:415.0px;color:#111">5120</div>
<div class="d" style="left:162.8px;top:415.0px;color:#111">162.69</div>
<div class="d" style="left:226.8px;top:415.0px;color:#111">100.0</div>
<div class="d" style="left:290.8px;top:415.0px;color:#111">11.3</div>
<div class="d" style="left:354px;top:413.0px;color:#111">8.77</div>
<div class="d" style="left:418.8px;top:415.0px;color:#111">0.0</div>
<div class="d" style="left:482.8px;top:415.0px;color:#111">0.0</div>
<div class="d" style="left:546.8px;top:415.0px;color:#111">-1.5</div>
<div class="d" style="left:610.8px;top:415.0px;color:#111">0.0</div>
<div class="d" style="left:674px;top:413.0px;color:#111">8.85</div>
<div class="d" style="left:738.8px;top:415.0px;color:#111">0.80</div>
<div class="d" style="left:802.8px;top:415.0px;color:#111">0.81</div>
<div class="d" style="left:34px;top:429.0px;color:#111">9.17</div>
<div class="d" style="left:98.8px;top:431.0px;color:#111">5240</div>
<div class="d" style="left:162.8px;top:431.0px;color:#111">163.67</div>
<div class="d" style="left:226.8px;top:431.0px;color:#111">100.0</div>
<div class="d" style="left:290.8px;top:431.0px;color:#111">12.0</div>
<div class="d" style="left:354px;top:429.0px;color:#111">9.02</div>
<div class="d" style="left:418.8px;top:431.0px;color:#111">0.0</div>
<div class="d" style="left:482.8px;top:431.0px;color:#111">0.0</div>
<div class="d" style="left:546.8px;top:431.0px;color:#111">-0.8</div>
<div class="d" style="left:610.8px;top:431.0px;color:#111">0.0</div>
<div class="d" style="left:674px;top:429.0px;color:#111">9.10</div>
<div class="d" style="left:738.8px;top:431.0px;color:#111">0.80</div>
<div class="d" style="left:802.8px;top:431.0px;color:#111">0.81</div>
<div class="d" style="left:34px;top:445.0px;color:#111">9.40</div>
<div class="d" style="left:98.8px;top:447.0px;color:#111">5320</div>
<div class="d" style="left:162.8px;top:447.0px;color:#111">161.69</div>
<div class="d" style="left:226.8px;top:447.0px;color:#111">100.0</div>
<div class="d" style="left:290.8px;top:447.0px;color:#111">12.8</div>
<div class="d" style="left:354px;top:445.0px;color:#111">9.26</div>
<div class="d" style="left:418.8px;top:447.0px;color:#111">0.0</div>
<div class="d" style="left:482.8px;top:447.0px;color:#111">0.0</div>
<div class="d" style="left:546.8px;top:447.0px;color:#111">-0.8</div>
<div class="d" style="left:610.8px;top:447.0px;color:#111">0.0</div>
<div class="d" style="left:674px;top:445.0px;color:#111">9.33</div>
<div class="d" style="left:738.8px;top:447.0px;color:#111">0.81</div>
<div class="d" style="left:802.8px;top:447.0px;color:#111">0.81</div>
<div class="d" style="left:34px;top:461.0px;color:#111">9.65</div>
<div class="d" style="left:98.8px;top:463.0px;color:#111">5360</div>
<div class="d" style="left:162.8px;top:463.0px;color:#111">164.50</div>
<div class="d" style="left:226.8px;top:463.0px;color:#111">100.0</div>
<div class="d" style="left:290.8px;top:463.0px;color:#111">14.3</div>
<div class="d" style="left:354px;top:461.0px;color:#111">9.47</div>
<div class="d" style="left:418.8px;top:463.0px;color:#111">0.0</div>
<div class="d" style="left:482.8px;top:463.0px;color:#111">0.0</div>
<div class="d" style="left:546.8px;top:463.0px;color:#111">-0.8</div>
<div class="d" style="left:610.8px;top:463.0px;color:#111">0.0</div>
<div class="d" style="left:674px;top:461.0px;color:#111">9.56</div>
<div class="d" style="left:738.8px;top:463.0px;color:#111">0.80</div>
<div class="d" style="left:802.8px;top:463.0px;color:#111">0.81</div>
<div class="d" style="left:34px;top:477.0px;color:#111">9.88</div>
<div class="d" style="left:98.8px;top:479.0px;color:#111">5440</div>
<div class="d" style="left:162.8px;top:479.0px;color:#111">162.28</div>
<div class="d" style="left:226.8px;top:479.0px;color:#111">100.0</div>
<div class="d" style="left:290.8px;top:479.0px;color:#111">14.3</div>
<div class="d" style="left:354px;top:477.0px;color:#111">9.72</div>
<div class="d" style="left:418.8px;top:479.0px;color:#111">0.0</div>
<div class="d" style="left:482.8px;top:479.0px;color:#111">0.0</div>
<div class="d" style="left:546.8px;top:479.0px;color:#111">-0.8</div>
<div class="d" style="left:610.8px;top:479.0px;color:#111">0.0</div>
<div class="d" style="left:674px;top:477.0px;color:#111">9.80</div>
<div class="d" style="left:738.8px;top:479.0px;color:#111">0.80</div>
<div class="d" style="left:802.8px;top:479.0px;color:#111">0.81</div>
<div class="d" style="left:34px;top:493.0px;color:#111">10.13</div>
<div class="d" style="left:98.8px;top:495.0px;color:#111">5560</div>
<div class="d" style="left:162.8px;top:495.0px;color:#111">162.14</div>
<div class="d" style="left:226.8px;top:495.0px;color:#111">100.0</div>
<div class="d" style="left:290.8px;top:495.0px;color:#111">15.8</div>
<div class="d" style="left:354px;top:493.0px;color:#111">9.95</div>
<div class="d" style="left:418.8px;top:495.0px;color:#111">0.0</div>
<div class="d" style="left:482.8px;top:495.0px;color:#111">0.0</div>
<div class="d" style="left:546.8px;top:495.0px;color:#111">-0.8</div>
<div class="d" style="left:610.8px;top:495.0px;color:#111">0.0</div>
<div class="d" style="left:674px;top:493.0px;color:#111">10.03</div>
<div class="d" style="left:738.8px;top:495.0px;color:#111">0.80</div>
<div class="d" style="left:802.8px;top:495.0px;color:#111">0.81</div>
<div class="d" style="left:34px;top:509.0px;color:#111">10.36</div>
<div class="d" style="left:98.8px;top:511.0px;color:#111">5600</div>
<div class="d" style="left:162.8px;top:511.0px;color:#111">163.69</div>
<div class="d" style="left:226.8px;top:511.0px;color:#111">100.0</div>
<div class="d" style="left:290.8px;top:511.0px;color:#111">15.0</div>
<div class="d" style="left:354px;top:509.0px;color:#111">10.21</div>
<div class="d" style="left:418.8px;top:511.0px;color:#111">0.0</div>
<div class="d" style="left:482.8px;top:511.0px;color:#111">0.0</div>
<div class="d" style="left:546.8px;top:511.0px;color:#111">-0.8</div>
<div class="d" style="left:610.8px;top:511.0px;color:#111">0.0</div>
<div class="d" style="left:674px;top:509.0px;color:#111">10.29</div>
<div class="d" style="left:738.8px;top:511.0px;color:#111">0.81</div>
<div class="d" style="left:802.8px;top:511.0px;color:#111">0.81</div>
<div class="d" style="left:34px;top:525.0px;color:#111">10.58</div>
<div class="d" style="left:98.8px;top:527.0px;color:#111">5680</div>
<div class="d" style="left:162.8px;top:527.0px;color:#111">163.53</div>
<div class="d" style="left:226.8px;top:527.0px;color:#111">100.0</div>
<div class="d" style="left:290.8px;top:527.0px;color:#111">16.5</div>
<div class="d" style="left:354px;top:525.0px;color:#111">10.44</div>
<div class="d" style="left:418.8px;top:527.0px;color:#111">0.0</div>
<div class="d" style="left:482.8px;top:527.0px;color:#111">0.0</div>
<div class="d" style="left:546.8px;top:527.0px;color:#111">-0.8</div>
<div class="d" style="left:610.8px;top:527.0px;color:#111">0.0</div>
<div class="d" style="left:674px;top:525.0px;color:#111">10.51</div>
<div class="d" style="left:738.8px;top:527.0px;color:#111">0.80</div>
<div class="d" style="left:802.8px;top:527.0px;color:#111">0.81</div>
<div class="d" style="left:34px;top:541.0px;color:#111">10.83</div>
<div class="d" style="left:98.8px;top:543.0px;color:#111">5760</div>
<div class="d" style="left:162.8px;top:543.0px;color:#111">164.75</div>
<div class="d" style="left:226.8px;top:543.0px;color:#111">100.0</div>
<div class="d" style="left:290.8px;top:543.0px;color:#111">17.3</div>
<div class="d" style="left:354px;top:541.0px;color:#111">10.67</div>
<div class="d" style="left:418.8px;top:543.0px;color:#111">0.0</div>
<div class="d" style="left:482.8px;top:543.0px;color:#111">0.0</div>
<div class="d" style="left:546.8px;top:543.0px;color:#111">-0.8</div>
<div class="d" style="left:610.8px;top:543.0px;color:#111">0.0</div>
<div class="d" style="left:674px;top:541.0px;color:#111">10.75</div>
<div class="d" style="left:738.8px;top:543.0px;color:#111">0.80</div>
<div class="d" style="left:802.8px;top:543.0px;color:#111">0.81</div>
<div class="d" style="left:34px;top:557.0px;color:#111">11.07</div>
<div class="d" style="left:98.8px;top:559.0px;color:#111">5840</div>
<div class="d" style="left:162.8px;top:559.0px;color:#111">167.11</div>
<div class="d" style="left:226.8px;top:559.0px;color:#111">100.0</div>
<div class="d" style="left:290.8px;top:559.0px;color:#111">18.0</div>
<div class="d" style="left:354px;top:557.0px;color:#111">10.91</div>
<div class="d" style="left:418.8px;top:559.0px;color:#111">0.0</div>
<div class="d" style="left:482.8px;top:559.0px;color:#111">0.0</div>
<div class="d" style="left:546.8px;top:559.0px;color:#111">-0.8</div>
<div class="d" style="left:610.8px;top:559.0px;color:#111">0.0</div>
<div class="d" style="left:674px;top:557.0px;color:#111">10.98</div>
<div class="d" style="left:738.8px;top:559.0px;color:#111">0.80</div>
<div class="d" style="left:802.8px;top:559.0px;color:#111">0.81</div>
<div class="d" style="left:34px;top:573.0px;color:#111">11.31</div>
<div class="d" style="left:98.8px;top:575.0px;color:#111">5920</div>
<div class="d" style="left:162.8px;top:575.0px;color:#111">166.67</div>
<div class="d" style="left:226.8px;top:575.0px;color:#111">100.0</div>
<div class="d" style="left:290.8px;top:575.0px;color:#111">18.0</div>
<div class="d" style="left:354px;top:573.0px;color:#111">11.14</div>
<div class="d" style="left:418.8px;top:575.0px;color:#111">0.0</div>
<div class="d" style="left:482.8px;top:575.0px;color:#111">0.0</div>
<div class="d" style="left:546.8px;top:575.0px;color:#111">-0.8</div>
<div class="d" style="left:610.8px;top:575.0px;color:#111">0.0</div>
<div class="d" style="left:674px;top:573.0px;color:#111">11.24</div>
<div class="d" style="left:738.8px;top:575.0px;color:#111">0.80</div>
<div class="d" style="left:802.8px;top:575.0px;color:#111">0.81</div>
<div class="d" style="left:34px;top:589.0px;color:#111">11.55</div>
<div class="d" style="left:98.8px;top:591.0px;color:#111">5960</div>
<div class="d" style="left:162.8px;top:591.0px;color:#111">165.53</div>
<div class="d" style="left:226.8px;top:591.0px;color:#111">100.0</div>
<div class="d" style="left:290.8px;top:591.0px;color:#111">18.8</div>
<div class="d" style="left:354px;top:589.0px;color:#111">11.39</div>
<div class="d" style="left:418.8px;top:591.0px;color:#111">0.0</div>
<div class="d" style="left:482.8px;top:591.0px;color:#111">0.0</div>
<div class="d" style="left:546.8px;top:591.0px;color:#111">-0.8</div>
<div class="d" style="left:610.8px;top:591.0px;color:#111">0.0</div>
<div class="d" style="left:674px;top:589.0px;color:#111">11.47</div>
<div class="d" style="left:738.8px;top:591.0px;color:#111">0.80</div>
<div class="d" style="left:802.8px;top:591.0px;color:#111">0.81</div>
<div class="d" style="left:34px;top:605.0px;color:#111">11.85</div>
<div class="d" style="left:98.8px;top:607.0px;color:#111">6040</div>
<div class="d" style="left:162.8px;top:607.0px;color:#111">166.83</div>
<div class="d" style="left:226.8px;top:607.0px;color:#111">100.0</div>
<div class="d" style="left:290.8px;top:607.0px;color:#111">19.5</div>
<div class="d" style="left:354px;top:605.0px;color:#111">11.63</div>
<div class="d" style="left:418.8px;top:607.0px;color:#111">0.0</div>
<div class="d" style="left:482.8px;top:607.0px;color:#111">0.0</div>
<div class="d" style="left:546.8px;top:607.0px;color:#111">-0.8</div>
<div class="d" style="left:610.8px;top:607.0px;color:#111">0.0</div>
<div class="d" style="left:674px;top:605.0px;color:#111">11.70</div>
<div class="d" style="left:738.8px;top:607.0px;color:#111">0.80</div>
<div class="d" style="left:802.8px;top:607.0px;color:#111">0.80</div>
<div class="d" style="left:34px;top:621.0px;color:#111">12.08</div>
<div class="d" style="left:98.8px;top:623.0px;color:#111">6120</div>
<div class="d" style="left:162.8px;top:623.0px;color:#111">166.67</div>
<div class="d" style="left:226.8px;top:623.0px;color:#111">100.0</div>
<div class="d" style="left:290.8px;top:623.0px;color:#111">20.3</div>
<div class="d" style="left:354px;top:621.0px;color:#111">11.92</div>
<div class="d" style="left:418.8px;top:623.0px;color:#111">0.0</div>
<div class="d" style="left:482.8px;top:623.0px;color:#111">0.0</div>
<div class="d" style="left:546.8px;top:623.0px;color:#111">0.0</div>
<div class="d" style="left:610.8px;top:623.0px;color:#111">0.0</div>
<div class="d" style="left:674px;top:621.0px;color:#111">12.00</div>
<div class="d" style="left:738.8px;top:623.0px;color:#111">0.80</div>
<div class="d" style="left:802.8px;top:623.0px;color:#111">0.80</div>
<div class="d" style="left:34px;top:637.0px;color:#111">12.34</div>
<div class="d" style="left:98.8px;top:639.0px;color:#111">6160</div>
<div class="d" style="left:162.8px;top:639.0px;color:#111">165.31</div>
<div class="d" style="left:226.8px;top:639.0px;color:#111">100.0</div>
<div class="d" style="left:290.8px;top:639.0px;color:#111">20.3</div>
<div class="d" style="left:354px;top:637.0px;color:#111">12.16</div>
<div class="d" style="left:418.8px;top:639.0px;color:#111">0.0</div>
<div class="d" style="left:482.8px;top:639.0px;color:#111">0.0</div>
<div class="d" style="left:546.8px;top:639.0px;color:#111">0.0</div>
<div class="d" style="left:610.8px;top:639.0px;color:#111">0.0</div>
<div class="d" style="left:674px;top:637.0px;color:#111">12.23</div>
<div class="d" style="left:738.8px;top:639.0px;color:#111">0.80</div>
<div class="d" style="left:802.8px;top:639.0px;color:#111">0.80</div>
<div class="d" style="left:34px;top:653.0px;color:#111">12.56</div>
<div class="d" style="left:98.8px;top:655.0px;color:#111">6240</div>
<div class="d" style="left:162.8px;top:655.0px;color:#111">166.33</div>
<div class="d" style="left:226.8px;top:655.0px;color:#111">100.0</div>
<div class="d" style="left:290.8px;top:655.0px;color:#111">21.0</div>
<div class="d" style="left:354px;top:653.0px;color:#111">12.41</div>
<div class="d" style="left:418.8px;top:655.0px;color:#111">0.0</div>
<div class="d" style="left:482.8px;top:655.0px;color:#111">0.0</div>
<div class="d" style="left:546.8px;top:655.0px;color:#111">0.0</div>
<div class="d" style="left:610.8px;top:655.0px;color:#111">0.0</div>
<div class="d" style="left:674px;top:653.0px;color:#111">12.48</div>
<div class="d" style="left:738.8px;top:655.0px;color:#111">0.80</div>
<div class="d" style="left:802.8px;top:655.0px;color:#111">0.80</div>
<div class="d" style="left:34px;top:669.0px;color:#111">12.80</div>
<div class="d" style="left:98.8px;top:671.0px;color:#111">6320</div>
<div class="d" style="left:162.8px;top:671.0px;color:#111">166.50</div>
<div class="d" style="left:226.8px;top:671.0px;color:#111">78.8</div>
<div class="d" style="left:290.8px;top:671.0px;color:#111">21.8</div>
<div class="d" style="left:354px;top:669.0px;color:#111">12.64</div>
<div class="d" style="left:418.8px;top:671.0px;color:#111">0.0</div>
<div class="d" style="left:482.8px;top:671.0px;color:#111">0.0</div>
<div class="d" style="left:546.8px;top:671.0px;color:#111">0.0</div>
<div class="d" style="left:610.8px;top:671.0px;color:#111">0.0</div>
<div class="d" style="left:674px;top:669.0px;color:#111">12.72</div>
<div class="d" style="left:738.8px;top:671.0px;color:#111">0.82</div>
<div class="d" style="left:802.8px;top:671.0px;color:#111">0.80</div>
<div class="d" style="left:34px;top:685.0px;color:#111">13.05</div>
<div class="d" style="left:98.8px;top:687.0px;color:#111">6240</div>
<div class="d" style="left:162.8px;top:687.0px;color:#111">9.14</div>
<div class="d" style="left:226.8px;top:687.0px;color:#111">11.8</div>
<div class="d" style="left:290.8px;top:687.0px;color:#111">41.3</div>
<div class="d" style="left:354px;top:685.0px;color:#111">12.89</div>
<div class="d" style="left:418.8px;top:687.0px;color:#111">0.0</div>
<div class="d" style="left:482.8px;top:687.0px;color:#111">0.0</div>
<div class="d" style="left:546.8px;top:687.0px;color:#111">0.0</div>
<div class="d" style="left:610.8px;top:687.0px;color:#111">0.0</div>
<div class="d" style="left:674px;top:685.0px;color:#111">12.97</div>
<div class="d" style="left:738.8px;top:687.0px;color:#111">0.86</div>
<div class="d" style="left:802.8px;top:687.0px;color:#111">0.92</div>
<div class="d" style="left:34px;top:701.0px;color:#fff">13.28</div>
<div class="d" style="left:98.8px;top:703.0px;color:#fff">6240</div>
<div class="d" style="left:162.8px;top:703.0px;color:#fff">10.17</div>
<div class="d" style="left:226.8px;top:703.0px;color:#fff">10.6</div>
<div class="d" style="left:290.8px;top:703.0px;color:#fff">12.0</div>
<div class="d" style="left:354px;top:701.0px;color:#fff">13.12</div>
<div class="d" style="left:418.8px;top:703.0px;color:#fff">0.0</div>
<div class="d" style="left:482.8px;top:703.0px;color:#fff">0.0</div>
<div class="d" style="left:546.8px;top:703.0px;color:#fff">0.0</div>
<div class="d" style="left:610.8px;top:703.0px;color:#fff">0.0</div>
<div class="d" style="left:674px;top:701.0px;color:#fff">13.20</div>
<div class="d" style="left:738.8px;top:703.0px;color:#fff">0.93</div>
<div class="d" style="left:802.8px;top:703.0px;color:#fff">1.02</div>
<div class="a" style="left:1513px;top:153px;width:17px;height:575px;background:#f0f0f0"></div>
<svg class="a" style="left:1516px;top:158px" width="11" height="8" viewBox="0 0 11 8"><path d="M1.5 6 L5.5 2 L9.5 6" stroke="#606060" stroke-width="1.6" fill="none"/></svg>
<div class="a" style="left:1514px;top:694px;width:15px;height:16px;background:#cdcdcd"></div>
<svg class="a" style="left:1516px;top:714px" width="11" height="8" viewBox="0 0 11 8"><path d="M1.5 2 L5.5 6 L9.5 2" stroke="#606060" stroke-width="1.6" fill="none"/></svg>
<div class="a" style="left:0;top:728px;width:1536px;height:3px;background:#f0f0f0"></div>
<div class="a" style="left:0;top:731.5px;width:1536px;height:2px;background:#9a9a9a"></div>
<div class="a" style="left:1px;top:733px;width:1534px;height:71px;border-left:1px solid #d0d0d0;border-right:1px solid #d0d0d0;border-bottom:1px solid #c4c4c4"></div>
<div class="a" style="left:0;top:808px;width:1536px;height:1px;background:#c4c4c4"></div>
<div class="t" style="left:15px;top:746.5px;font-size:13px;color:#111;transform:scaleX(0.8);transform-origin:0 0">Columns width:</div>
<div class="a" style="left:86px;top:742px;width:40.5px;height:20px;background:#fff;border-left:1.8px solid #8c8c8c;border-top:1.8px solid #8c8c8c;border-right:1.5px solid #a0a0a0"></div>
<div class="t" style="left:89.5px;top:744px;font-size:13px;color:#111;transform:scaleX(0.85);transform-origin:0 0">63</div>
<div class="a" style="left:110.5px;top:744px;width:14px;height:16px;background:#f4f4f4"></div>
<div class="a" style="left:110.5px;top:759px;width:15.5px;height:2px;background:#9a9a9a"></div>
<svg class="a" style="left:112px;top:745px" width="13" height="14" viewBox="0 0 13 14"><path d="M2.5 6 L6.5 2 L10.5 6 Z M2.5 8.5 L6.5 12.5 L10.5 8.5 Z" fill="#000"/><path d="M0 6.8H13" stroke="#e0e0e0" stroke-width="0.8"/></svg>
<div class="a" style="left:13.5px;top:776px;width:12.5px;height:12px;background:#fff;border-left:2px solid #a0a0a0;border-top:2px solid #a0a0a0;border-right:1px solid #e6e6e6;border-bottom:1px solid #e6e6e6"></div>
<svg class="a" style="left:15px;top:777px" width="11" height="11" viewBox="0 0 11 11"><path d="M2.5 5 L4.8 7.8 L9.2 3" stroke="#111" stroke-width="1.9" fill="none"/></svg>
<div class="t" style="left:33px;top:775px;font-size:13px;color:#111;transform:scaleX(0.8);transform-origin:0 0">Color resolution</div>
<svg class="a" style="left:1359px;top:745px" width="151" height="28" viewBox="0 0 151 28">
<rect x="0.5" y="0.5" width="150" height="27" rx="13.5" fill="#141414"/>
<circle cx="15" cy="15" r="8.5" fill="none" stroke="#b01818" stroke-width="1.8"/>
<circle cx="15" cy="15" r="3.5" fill="none" stroke="#b01818" stroke-width="1.5"/>
<path d="M15 15L11 10M15 15L20 13M15 15L13 20" stroke="#b01818" stroke-width="1"/>
<path d="M15 6.5 L27 6.5 L27 12" stroke="#b01818" stroke-width="1.8" fill="none"/>
<text x="30" y="11.8" font-family="Liberation Sans" font-weight="bold" font-size="13.5" fill="#e52222" textLength="114" lengthAdjust="spacingAndGlyphs">DIESELPOWER</text>
<text x="63" y="20.5" font-family="Liberation Sans" font-weight="bold" font-style="italic" font-size="9.5" fill="#f2f2f2" textLength="78" lengthAdjust="spacingAndGlyphs">race engineering</text>
</svg>
<div class="t" style="left:1370px;top:779px;font-size:11.2px;color:#0000ee;text-decoration:underline">http://www.dieselpower.cz</div>
<div class="a" style="left:0;top:824px;width:1536px;height:40px;background:linear-gradient(90deg,#121610 0%,#181c0c 25%,#22260a 50%,#262808 75%,#2a2a0a 100%)"></div>
<svg class="a" style="left:15px;top:836px" width="18" height="17" viewBox="0 0 18 17"><path d="M0 2.4L7.2 1.4V7.7H0Z M8.8 1.2L18 0V7.7H8.8Z M0 9.3H7.2V15.6L0 14.6Z M8.8 9.3H18V17L8.8 15.8Z" fill="#fff"/></svg>
<svg class="a" style="left:63px;top:835px" width="19" height="19" viewBox="0 0 19 19"><circle cx="11.5" cy="7.5" r="5.6" fill="none" stroke="#fff" stroke-width="1.5"/><path d="M7.5 11.5L1 18" stroke="#fff" stroke-width="1.6"/></svg>
<svg class="a" style="left:110px;top:835px" width="19" height="18" viewBox="0 0 19 18"><rect x="2" y="4" width="10" height="10" fill="none" stroke="#fff" stroke-width="1.4"/><path d="M0.5 1V17M13.5 1V17M17 1V7M17 10V17" stroke="#fff" stroke-width="1.3"/></svg>
<svg class="a" style="left:160px;top:833px" width="22" height="23" viewBox="0 0 22 23"><circle cx="12" cy="13" r="7.2" fill="none" stroke="#1a8ff2" stroke-width="5"/><rect x="13" y="14.6" width="9" height="3.4" fill="#171b0c"/><rect x="8" y="11.2" width="13.7" height="3.4" fill="#1a8ff2"/><path d="M0.5 12 C2 6 6.5 2 11.5 2 C14.5 2 17 3.2 18.5 5 C15 3.6 10.5 4 7 6.5 C4.5 8.2 2.2 10 0.5 12Z" fill="#1a8ff2"/></svg>
<svg class="a" style="left:209.5px;top:834px" width="23" height="20" viewBox="0 0 23 20"><path d="M0.5 1.5 Q0.5 0.5 1.5 0.5 L7.5 0.5 L9.5 2.5 L22.5 2.5 L22.5 19.5 L0.5 19.5Z" fill="#f8d46a"/><rect x="0.5" y="3.5" width="22" height="16" fill="#fbe08a"/><rect x="2" y="1.2" width="3" height="1.4" fill="#f0f0e0"/><path d="M6.2 19.8 V12.5 H16.8 V19.8" fill="none" stroke="#2aa8ec" stroke-width="3"/></svg>
<div class="a" style="left:201px;top:861px;width:40px;height:3px;background:#76b9ed"></div>
<svg class="a" style="left:258px;top:831px" width="24" height="24" viewBox="0 0 24 24"><circle cx="12.5" cy="12" r="10.5" fill="#f07020"/><circle cx="14" cy="10" r="7.2" fill="#2a5fc0"/><circle cx="15" cy="8.5" r="3.5" fill="#3aa0e8"/><path d="M2 8 C1 14 4 21 12 22.5 C18 23 22.5 18.5 22.8 12.5 C21.5 17 17.5 19.5 13 19 C9 18.5 7 15.5 7.5 12.5 C8 10 10 9 11.5 9.5 C10 7 8.5 5.5 6 4 C5.5 6 5 7 2 8Z" fill="#f26a1e"/><path d="M20 5 C22 7.5 23 10 22.8 12.5 C22 11 21 10.2 20.5 10 C21 8 20.8 6.5 20 5Z" fill="#ffc030"/><path d="M2.2 8 C3 5 5 3 7 2 C6.5 3.5 6.5 4.5 6 4 C5 5.5 3.5 7 2.2 8Z" fill="#ff9a20"/></svg>
<svg class="a" style="left:308.5px;top:832px" width="23" height="23" viewBox="0 0 23 23"><rect x="0.5" y="0.5" width="22" height="22" rx="2.5" fill="#78b62c"/><path d="M3.5 15.5 C2 15.5 2 12 4.5 12 C5 10 7 9.5 8.5 10.5 C9.5 7 14 6.8 15 10 C16.5 9 19 10 19 12.5 C21 12.5 21 15.5 19.5 15.5 Z" fill="none" stroke="#fff" stroke-width="1.6"/><circle cx="12.5" cy="13" r="1.8" fill="none" stroke="#fff" stroke-width="1.2"/><circle cx="17" cy="13.5" r="1.6" fill="none" stroke="#fff" stroke-width="1.2"/></svg>
<svg class="a" style="left:357.5px;top:832px" width="24" height="23" viewBox="0 0 24 23"><rect x="0.5" y="0.5" width="23" height="22" rx="2" fill="#3a9c38"/><path d="M6 5 V19.5 H15" fill="none" stroke="#fff" stroke-width="1.3"/><path d="M8.5 3 H17.5 V18 H8.5 Z" fill="none" stroke="#fff" stroke-width="1.3"/><path d="M11 7 H15 M11 10 H15 M11 13 H15" stroke="#fff" stroke-width="1.1"/><path d="M17.5 3 L19.5 4.5 V19" fill="none" stroke="#fff" stroke-width="1"/></svg>
<svg class="a" style="left:406px;top:835px" width="26" height="18" viewBox="0 0 26 18"><path d="M1 7L13 1L25 7V17H1Z" fill="#fff"/><path d="M1 7L13 13L25 7" fill="none" stroke="#1a1d0b" stroke-width="1.6"/><path d="M1 17L10 10.5M25 17L16 10.5" stroke="#1a1d0b" stroke-width="1"/></svg>
<svg class="a" style="left:457px;top:833px" width="24" height="24" viewBox="0 0 24 24"><circle cx="12" cy="12" r="11" fill="#db4437"/><path d="M12 12L2.5 6.5A11 11 0 0 0 12 23Z" fill="#0f9d58"/><path d="M12 12L12 23A11 11 0 0 0 21.5 6.5Z" fill="#ffcd40"/><path d="M12 12 L21.5 6.5 A11 11 0 0 0 2.5 6.5Z" fill="#db4437"/><circle cx="12" cy="12" r="5.2" fill="#fff"/><circle cx="12" cy="12" r="4" fill="#4285f4"/></svg>
<div class="a" style="left:449.5px;top:861px;width:40px;height:3px;background:#76b9ed"></div>
<div class="a" style="left:494.5px;top:824px;width:48.5px;height:40px;background:#4a4a38"></div>
<div class="a" style="left:494.5px;top:861px;width:48.5px;height:3px;background:#76b9ed"></div>
<svg class="a" style="left:505px;top:835px" width="22" height="19" viewBox="0 0 27 27" preserveAspectRatio="none">
<rect x="0" y="0" width="27" height="27" fill="#1c1f24"/>
<rect x="2" y="4" width="11" height="9" fill="#4a90a0"/>
<rect x="2" y="13" width="11" height="11" fill="#1f7a45"/>
<rect x="1" y="9" width="3" height="6" fill="#6ad0a0"/>
<rect x="13" y="10" width="12" height="14" fill="#3a4050"/>
<path d="M12 14 L17 10 L25 3" stroke="#b8a848" stroke-width="3.2" fill="none"/>
</svg>
<svg class="a" style="left:1250px;top:835px" width="17" height="17" viewBox="0 0 17 17"><circle cx="5" cy="9" r="2.6" fill="none" stroke="#fff" stroke-width="1.2"/><path d="M0.8 16.5C0.8 13.5 2.5 12 5 12C7.5 12 9.2 13.5 9.2 16.5" fill="none" stroke="#fff" stroke-width="1.2"/><circle cx="11.5" cy="4" r="2.6" fill="none" stroke="#fff" stroke-width="1.2"/><path d="M8.8 10C9 8 10 7 11.5 7C14 7 16 8.5 16 11.5" fill="none" stroke="#fff" stroke-width="1.2"/></svg>
<svg class="a" style="left:1287px;top:840px" width="14" height="9" viewBox="0 0 14 9"><path d="M1 8L7 2L13 8" fill="none" stroke="#fff" stroke-width="1.4"/></svg>
<svg class="a" style="left:1310px;top:835px" width="17" height="18" viewBox="0 0 17 18"><path d="M1 3L7.5 1L14 3V9C14 13 11 15.5 7.5 17C4 15.5 1 13 1 9Z" fill="#8a98a8" stroke="#dfe6ee" stroke-width="1"/><path d="M3.5 4.5L7.5 3.2V14.5C5 13 3.5 11 3.5 9Z" fill="#dfe6ee"/><rect x="8.5" y="8.5" width="8" height="9" fill="#d01f2a"/><path d="M10.5 10.5H14.5M12.5 10.5V16" stroke="#fff" stroke-width="1.2"/></svg>
<svg class="a" style="left:1333px;top:839px" width="18" height="12" viewBox="0 0 18 12"><rect x="4" y="2" width="13.5" height="9" fill="#fff"/><rect x="1" y="0.5" width="2" height="4" fill="#fff"/><path d="M2 5V11" stroke="#fff" stroke-width="1"/></svg>
<svg class="a" style="left:1357px;top:837px" width="18" height="16" viewBox="0 0 18 16"><path d="M1 5.5H4L8.5 1.5V14.5L4 10.5H1Z" fill="none" stroke="#fff" stroke-width="1.2"/><path d="M11 5C12 6 12 10 11 11M13.5 3C15.3 5 15.3 11 13.5 13M16 1.5C18 4.5 18 11.5 16 14.5" fill="none" stroke="#fff" stroke-width="1"/></svg>
<div class="t" style="left:1385px;top:839px;font-size:12px;color:#fff;transform:scaleX(0.92);transform-origin:0 0">РУС</div>
<div class="t" style="left:1435px;top:828.5px;font-size:12.5px;color:#fff;transform:scaleX(0.95);transform-origin:0 0">21:10</div>
<div class="t" style="left:1421px;top:846.5px;font-size:12.5px;color:#fff;transform:scaleX(0.89);transform-origin:0 0">11.12.2018</div>
<svg class="a" style="left:1494px;top:836px" width="26" height="23" viewBox="0 0 26 23"><path d="M1 1H21V14H8L4 18V14H1Z" fill="#fff"/><path d="M4 5H18M4 8H18M4 11H14" stroke="#1f2208" stroke-width="1"/><circle cx="17" cy="15.5" r="7" fill="#2a2c20" stroke="#ccc" stroke-width="1"/></svg>
<div class="t" style="left:1507px;top:845.5px;font-size:11px;color:#fff">3</div>
<div class="a" style="left:1530px;top:824px;width:1.5px;height:40px;background:#6a6a5a"></div>
</div></body></html>
